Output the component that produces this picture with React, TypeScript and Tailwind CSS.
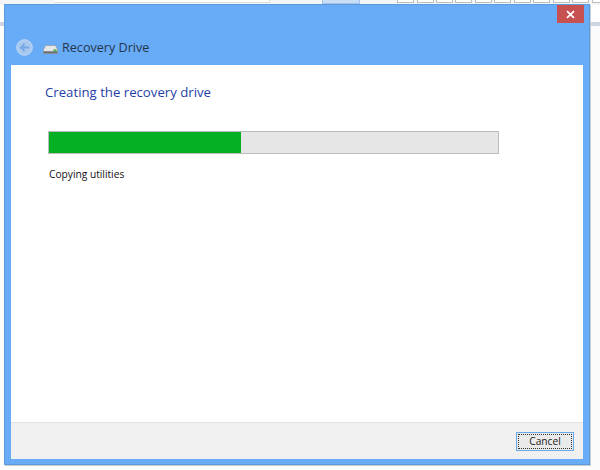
import React from "react";

const boxes = [397, 417, 436, 455, 475, 494, 514, 533, 553, 572, 592];

export default function App() {
  return (
    <div className="w-[600px] h-[470px] bg-white overflow-hidden relative" style={{ fontFamily: '"Open Sans","Noto Sans","Liberation Sans",sans-serif' }}>
      {/* background behind window */}
      <div className="absolute left-0 top-0 w-[600px] h-[5px] bg-[#f4f5f6]">
        <div className="absolute left-[55px] top-0 w-[215px] h-[3px] bg-white border-r border-b border-[#dcdcdc]" />
        <div className="absolute left-[322px] top-0 w-[38px] h-[4px] bg-[#c9def5] border border-t-0 border-[#9fc3ea]" />
        {boxes.map((x) => (
          <div key={x} className="absolute top-0 w-[17px] h-[3px] bg-white border border-t-0 border-[#bdbdbd]" style={{ left: x }} />
        ))}
      </div>
      <div className="absolute left-0 top-[22px] w-[5px] h-[4px] bg-[#cdd5e2]" />
      <div className="absolute left-[590px] top-[22px] w-[10px] h-[4px] bg-[#cdd5e2]" />
      <div className="absolute left-[590px] top-[26px] w-[10px] h-[444px] bg-[#fbfbfc]" />

      {/* window */}
      <div className="absolute left-[4px] top-[4px] w-[586px] h-[461px] flex flex-col bg-[#68abf7] border border-[#5f9bdc] shadow-[1px_1px_0_#c8ccd0]">
        <div className="h-[60px] shrink-0 relative flex flex-col justify-end">
          <div className="absolute right-[5px] top-0 w-[27px] h-[18px] bg-[#c75050] flex items-center justify-center">
            <svg width="9" height="9" viewBox="0 0 9 9">
              <path d="M1 1.2 L8 7.8 M8 1.2 L1 7.8" stroke="#ffffff" strokeWidth="1.7" />
            </svg>
          </div>
          <div className="flex items-center h-[20px] mb-[8px] pl-[11px]">
            <svg width="17" height="17" viewBox="0 0 17 17" className="shrink-0">
              <circle cx="8.5" cy="8.5" r="7.8" fill="#a7c9f0" stroke="#c4d8f0" strokeWidth="1" />
              <path d="M13 8.5 H5.5 M8.5 5 L5 8.5 L8.5 12" fill="none" stroke="#78a8e2" strokeWidth="1.8" />
            </svg>
            <svg width="15" height="9" viewBox="0 0 15 9" className="ml-[10px] mt-[4px] shrink-0">
              <path d="M2.5 0.5 H12.5 L14.5 4.5 V8.5 H0.5 V4.5 Z" fill="#e4e6e8" stroke="#8f9396" strokeWidth="0.6" />
              <rect x="0.5" y="6.2" width="14" height="2.3" fill="#6d7378" />
              <rect x="10.5" y="4.4" width="3" height="1.8" fill="#3bb54a" />
            </svg>
            <span className="ml-[4px] mt-[1px] text-[12.6px] leading-[20px] text-[#24364d]">Recovery Drive</span>
          </div>
        </div>
        <div className="ml-[6px] mr-[6px] h-[394px] flex flex-col bg-white">
          <div className="flex-1 flex flex-col pl-[34px]">
            <div className="mt-[17px] text-[13.2px] leading-[20px] text-[#1f3fa6]">Creating the recovery drive</div>
            <div className="mt-[29px] ml-[3px] w-[451px] h-[23px] bg-[#e6e6e6] border border-[#bcbcbc] flex">
              <div className="w-[192px] h-full bg-[#06b025]" />
            </div>
            <div className="mt-[12px] ml-[4px] text-[10.2px] leading-[16px] text-[#111111]">Copying utilities</div>
          </div>
          <div className="h-[37px] shrink-0 bg-[#f0f0f0] border-t border-[#e4e4e4] flex items-start justify-end pt-[9px] pr-[9px]">
            <div className="w-[58px] h-[19px] bg-[#eaeaea] border border-[#6aa8e8] flex items-center justify-center p-[1px]">
              <div className="w-full h-full border border-dotted border-[#333333] flex items-center justify-center text-[10.2px] leading-none text-[#222222]">Cancel</div>
            </div>
          </div>
        </div>
      </div>
    </div>
  );
}
